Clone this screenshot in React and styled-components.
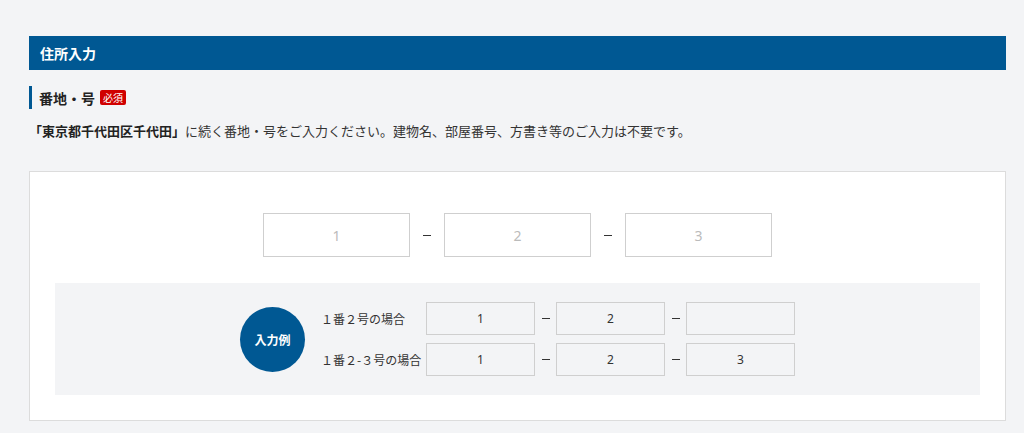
import React from "react";
import styled, { createGlobalStyle } from "styled-components";

const GlobalStyle = createGlobalStyle`
  body {
    margin: 0;
    background: #f3f4f6;
    font-family: "Noto Sans CJK JP", "Noto Sans", sans-serif;
    color: #222;
  }
`;

const Page = styled.div`
  padding: 36px 18px 0 29px;
`;

const TitleBar = styled.div`
  height: 34px;
  display: flex;
  align-items: center;
  padding-left: 11px;
  background: #005893;
  color: #fff;
  font-size: 14px;
  font-weight: 700;
`;

const Heading = styled.div`
  margin-top: 16px;
  height: 23px;
  display: flex;
  align-items: center;
  gap: 5px;
  padding-left: 7px;
  border-left: 3px solid #005893;
  font-size: 14px;
  font-weight: 700;
`;

const Required = styled.span`
  background: #d00000;
  color: #fff;
  font-size: 10px;
  font-weight: 400;
  line-height: 15px;
  padding: 0 3px;
  border-radius: 2px;
`;

const Description = styled.p`
  margin: 12px 0 0;
  font-size: 13px;
  line-height: 20px;
  color: #333;

  strong {
    color: #222;
  }
`;

const Card = styled.div`
  margin-top: 30px;
  background: #fff;
  border: 1px solid #dcdcdc;
  padding: 41px 25px 25px;
`;

const InputRow = styled.div`
  display: flex;
  justify-content: center;
  align-items: center;
`;

const Field = styled.input`
  box-sizing: border-box;
  width: ${(p) => (p.$small ? 109 : 147)}px;
  height: ${(p) => (p.$small ? 33 : 44)}px;
  border: 1px solid #cfcfcf;
  background: ${(p) => (p.$small ? "transparent" : "#fff")};
  text-align: center;
  font-family: "Noto Sans", sans-serif;
  font-size: ${(p) => (p.$small ? 12 : 14)}px;
  color: #333;
  outline: none;

  &::placeholder {
    color: #bbb;
  }
`;

const Dash = styled.span`
  width: ${(p) => (p.$small ? 21 : 34)}px;
  display: flex;
  justify-content: center;

  &::before {
    content: "";
    width: 8px;
    height: 1px;
    background: #333;
  }
`;

const Example = styled.div`
  margin-top: 26px;
  height: 112px;
  background: #f3f4f6;
  display: flex;
  justify-content: center;
  align-items: center;
`;

const Badge = styled.div`
  width: 65px;
  height: 65px;
  border-radius: 50%;
  background: #005893;
  color: #fff;
  font-size: 12px;
  font-weight: 700;
  display: flex;
  align-items: center;
  justify-content: center;
  margin-right: 16px;
`;

const Rows = styled.div`
  display: grid;
  grid-template-columns: 105px auto;
  row-gap: 8px;
  align-items: center;
`;

const Label = styled.span`
  font-size: 12px;
  color: #333;
`;

const Boxes = styled.div`
  display: flex;
  align-items: center;
`;

const examples = [
  { label: "１番２号の場合", values: ["1", "2", ""] },
  { label: "１番２-３号の場合", values: ["1", "2", "3"] },
];

export default function App() {
  return (
    <Page>
      <GlobalStyle />
      <TitleBar>住所入力</TitleBar>
      <Heading>
        番地・号 <Required>必須</Required>
      </Heading>
      <Description>
        <strong>「東京都千代田区千代田」</strong>に続く番地・号をご入力ください。建物名、部屋番号、方書き等のご入力は不要です。
      </Description>
      <Card>
        <InputRow>
          <Field placeholder="1" />
          <Dash />
          <Field placeholder="2" />
          <Dash />
          <Field placeholder="3" />
        </InputRow>
        <Example>
          <Badge>入力例</Badge>
          <Rows>
            {examples.map((ex) => (
              <React.Fragment key={ex.label}>
                <Label>{ex.label}</Label>
                <Boxes>
                  {ex.values.map((v, i) => (
                    <React.Fragment key={i}>
                      {i > 0 && <Dash $small />}
                      <Field $small readOnly value={v} />
                    </React.Fragment>
                  ))}
                </Boxes>
              </React.Fragment>
            ))}
          </Rows>
        </Example>
      </Card>
    </Page>
  );
}
